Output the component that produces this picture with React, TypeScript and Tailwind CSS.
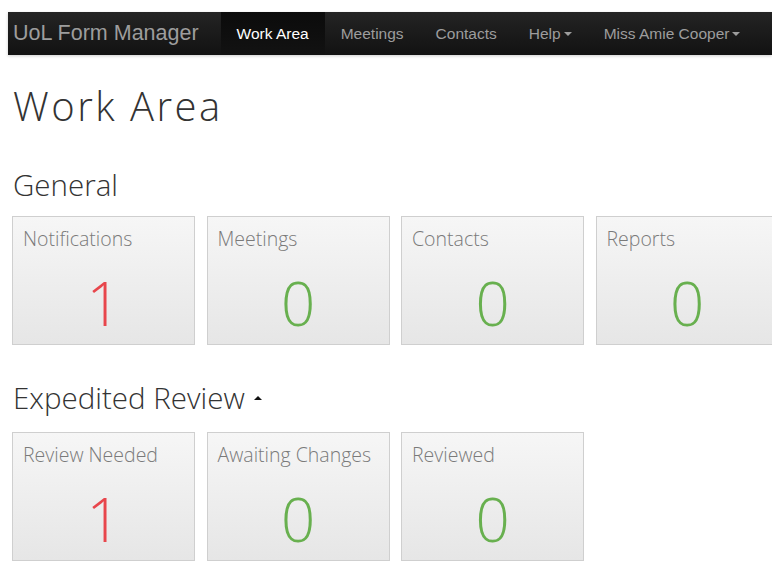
import { ReactNode } from 'react'

type Tile = { label: string; count: number }

const GENERAL: Tile[] = [
  { label: 'Notifications', count: 1 },
  { label: 'Meetings', count: 0 },
  { label: 'Contacts', count: 0 },
  { label: 'Reports', count: 0 },
]

const EXPEDITED: Tile[] = [
  { label: 'Review Needed', count: 1 },
  { label: 'Awaiting Changes', count: 0 },
  { label: 'Reviewed', count: 0 },
]

function Caret({ up = false }: { up?: boolean }) {
  return (
    <span
      className={`block w-0 h-0 border-x-[4px] border-x-transparent ${
        up ? 'border-b-[4px] border-b-current' : 'border-t-[4px] border-t-current'
      }`}
    />
  )
}

function NavItem({ children, active = false }: { children: ReactNode; active?: boolean }) {
  return (
    <a
      href="#"
      className={`flex items-center gap-[3px] px-[16px] h-full ${
        active ? 'bg-gradient-to-b from-[#0b0b0b] to-[#121212] text-white' : 'text-[#9d9d9d]'
      }`}
    >
      {children}
    </a>
  )
}

function CountTile({ label, count }: Tile) {
  // anything outstanding is flagged red, empty queues are green
  const color = count > 0 ? 'text-[#e8464c]' : 'text-[#68b04f]'
  return (
    <div className="w-[183px] h-[129px] shrink-0 border border-[#cfcfcf] bg-gradient-to-b from-[#f6f6f6] to-[#e6e6e6] px-[10px] pt-[10px]">
      <div className="text-[19.5px] leading-[24px] font-light text-[#7a7a7a]">{label}</div>
      <div className={`text-center text-[60px] leading-none font-light mt-[22px] ${color}`}>{count}</div>
    </div>
  )
}

export default function App() {
  return (
    <div className="min-h-[586px] bg-white pt-[12px] overflow-hidden" style={{ fontFamily: '"Open Sans", sans-serif' }}>
      <nav
        className="ml-[8px] h-[43px] flex items-stretch bg-gradient-to-b from-[#242424] to-[#121212] shadow-[0_1px_3px_rgba(0,0,0,0.2)] text-[15.5px]"
        style={{ fontFamily: '"Liberation Sans", Arial, sans-serif' }}
      >
        <div className="flex items-center pl-[5px] pr-[22px] text-[21.5px] text-[#9d9d9d]">UoL Form Manager</div>
        <NavItem active>Work Area</NavItem>
        <NavItem>Meetings</NavItem>
        <NavItem>Contacts</NavItem>
        <NavItem>
          Help <Caret />
        </NavItem>
        <NavItem>
          Miss Amie Cooper <Caret />
        </NavItem>
      </nav>

      <div className="pl-[12px]">
        <h1 className="mt-[31px] pl-[1px] text-[40px] leading-none font-light tracking-[2.5px] text-[#333]">Work Area</h1>

        <h2 className="mt-[44px] pl-[1px] text-[29.5px] leading-[30px] font-light text-[#333]">General</h2>
        <div className="mt-[16px] flex gap-[11.5px]">
          {GENERAL.map((t) => (
            <CountTile key={t.label} {...t} />
          ))}
        </div>

        <h2 className="mt-[38px] pl-[1px] text-[29.5px] leading-[30px] font-light text-[#333] flex items-center gap-[9px]">
          Expedited Review
          <span className="text-[#111]">
            <Caret up />
          </span>
        </h2>
        <div className="mt-[19px] flex gap-[11.5px]">
          {EXPEDITED.map((t) => (
            <CountTile key={t.label} {...t} />
          ))}
        </div>
      </div>
    </div>
  )
}
